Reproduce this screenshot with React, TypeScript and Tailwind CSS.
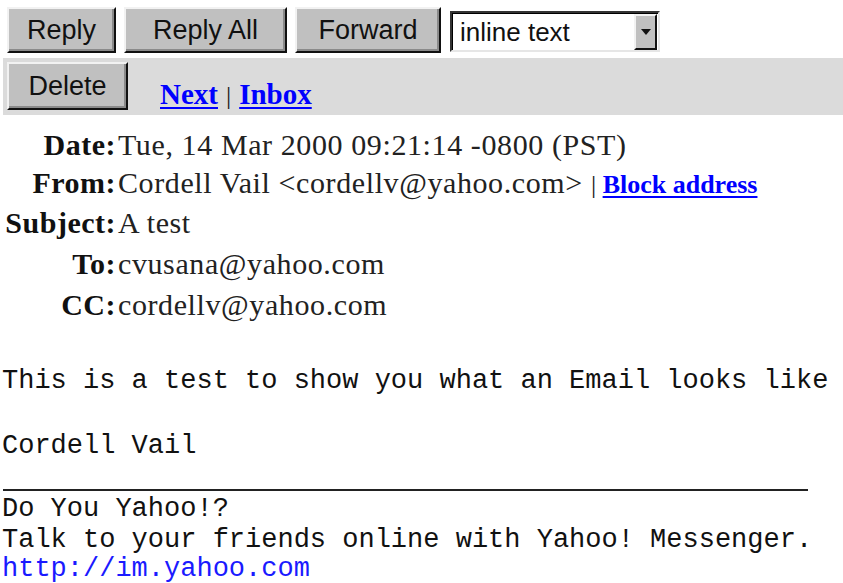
import React from "react";

const sans = "font-['Liberation_Sans',Arial,sans-serif]";
const serif = "font-['Liberation_Serif','Times_New_Roman',serif]";
const mono = "font-['Liberation_Mono','Courier_New',monospace]";

const bevel =
  "flex items-center justify-center bg-[#c0c0c0] border-2 border-t-[#f2f2f2] border-l-[#f2f2f2] border-b-[#111] border-r-[#111] shadow-[inset_-2px_-2px_0_#8a8a8a] text-[27px] leading-none text-[#111] " +
  sans;

function Button({ label, className }: { label: string; className: string }) {
  return (
    <button type="button" className={bevel + " " + className}>
      {label}
    </button>
  );
}

function ViewSelect() {
  return (
    <div className="mt-[4px] flex h-[41px] w-[210px] items-center border-2 border-t-[#333] border-l-[#333] border-b-[#e6e6e6] border-r-[#e6e6e6] bg-white shadow-[inset_1px_1px_0_#000]">
      <span className={"flex-1 pl-[8px] text-[26px] leading-none text-[#111] " + sans}>inline text</span>
      <span className="mr-[1px] flex h-[36px] w-[23px] items-center justify-center border-2 border-t-[#f2f2f2] border-l-[#f2f2f2] border-b-[#111] border-r-[#111] bg-[#c0c0c0]">
        <svg width="10" height="6" viewBox="0 0 10 6">
          <path d="M0 0h10L5 6z" fill="#111" />
        </svg>
      </span>
    </div>
  );
}

function HeaderRow({ label, height, children }: { label: string; height: string; children: React.ReactNode }) {
  return (
    <div className={"flex items-center " + height}>
      <span className="w-[116px] shrink-0 text-right text-[30px] font-bold leading-none tracking-[0.5px] text-[#111]">{label}</span>
      <span className="pl-[2px] text-[30px] leading-none tracking-[0.6px] text-[#222]">{children}</span>
    </div>
  );
}

export default function App() {
  return (
    <div className="h-[583px] w-[843px] overflow-hidden bg-white">
      {/* action buttons */}
      <div className="flex items-start pl-[7px] pt-[7px]">
        <Button label="Reply" className="h-[46px] w-[109px]" />
        <Button label="Reply All" className="ml-[8px] h-[46px] w-[163px]" />
        <Button label="Forward" className="ml-[8px] h-[46px] w-[146px]" />
        <div className="ml-[9px]">
          <ViewSelect />
        </div>
      </div>

      {/* navigation strip */}
      <div className="ml-[3px] mt-[5px] flex h-[57px] items-start bg-[#dbdbdb] pl-[4px] pt-[4px]">
        <Button label="Delete" className="h-[48px] w-[121px]" />
        <div className={"ml-[32px] mt-[18px] flex items-baseline text-[29px] leading-none " + serif}>
          <a href="#" className="font-bold text-[#0000ff] underline decoration-2 underline-offset-[3px]">Next</a>
          <span className="mx-[8px] text-[26px] text-[#222]">|</span>
          <a href="#" className="font-bold text-[#0000ff] underline decoration-2 underline-offset-[3px]">Inbox</a>
        </div>
      </div>

      {/* message headers */}
      <div className={"mt-[11px] " + serif}>
        <HeaderRow label="Date:" height="h-[38px]">Tue, 14 Mar 2000 09:21:14 -0800 (PST)</HeaderRow>
        <HeaderRow label="From:" height="h-[38px]">
          Cordell Vail &lt;cordellv@yahoo.com&gt;{" "}
          <span className="text-[26px] tracking-normal text-[#222]">| </span>
          <a href="#" className="text-[26px] font-bold tracking-normal text-[#0000ff] underline decoration-2 underline-offset-[3px]">Block address</a>
        </HeaderRow>
        <HeaderRow label="Subject:" height="h-[41px]">A test</HeaderRow>
        <HeaderRow label="To:" height="h-[42px]">cvusana@yahoo.com</HeaderRow>
        <HeaderRow label="CC:" height="h-[40px]">cordellv@yahoo.com</HeaderRow>
      </div>

      {/* message body */}
      <div className={"pl-[2px] text-[27px] leading-[31px] text-[#111] " + mono}>
        <div className="mt-[41px] whitespace-pre">This is a test to show you what an Email looks like</div>
        <div className="mt-[34px] whitespace-pre">Cordell Vail</div>
        <div className="ml-[1px] mt-[27px] h-[2px] w-[805px] bg-[#222]" />
        <div className="mt-[3px] whitespace-pre">Do You Yahoo!?</div>
        <div className="whitespace-pre">Talk to your friends online with Yahoo! Messenger.</div>
        <a href="#" className="block whitespace-pre leading-[27px] text-[#1a1aff]">http://im.yahoo.com</a>
      </div>
    </div>
  );
}
